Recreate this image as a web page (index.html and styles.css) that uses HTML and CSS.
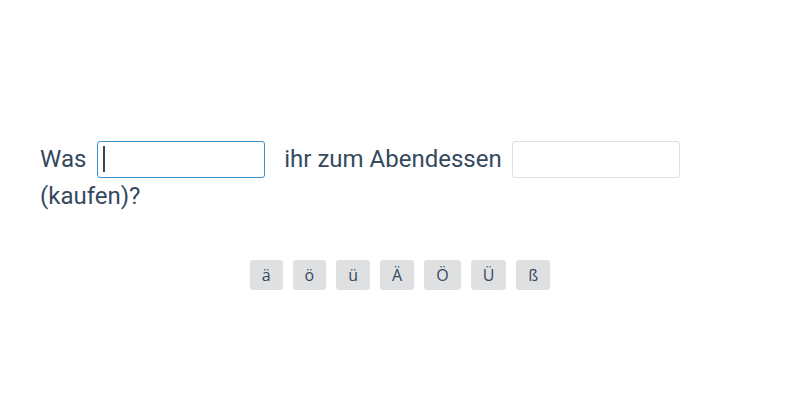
FILE: index.html
```html
<!DOCTYPE html>
<html lang="de">
<head>
<meta charset="utf-8">
<title>Lückentext</title>
<link rel="stylesheet" href="styles.css">
</head>
<body>
<main class="exercise">
  <p class="sentence">Was <span class="field field--active"><input class="gap" type="text" aria-label="Lücke 1"><span class="caret"></span></span> ihr zum Abendessen <span class="field field--second"><input class="gap" type="text" aria-label="Lücke 2"></span> (kaufen)?</p>
  <div class="keys">
    <button class="key" type="button">ä</button>
    <button class="key" type="button">ö</button>
    <button class="key" type="button">ü</button>
    <button class="key" type="button">Ä</button>
    <button class="key" type="button">Ö</button>
    <button class="key" type="button">Ü</button>
    <button class="key" type="button">ß</button>
  </div>
</main>
</body>
</html>
```
FILE: styles.css
```css
html, body {
  margin: 0;
  padding: 0;
  background: #ffffff;
}
body {
  font-family: Roboto, "Liberation Sans", sans-serif;
  color: #34495e;
}
.exercise {
  padding: 141px 40px 0 40px;
}
.sentence {
  margin: 0;
  font-size: 24px;
  line-height: 37px;
}
.field {
  position: relative;
  display: inline-block;
  vertical-align: top;
  margin: 0 5px 0 5px;
}
.field--second {
  margin-left: 4px;
}
.gap {
  display: block;
  box-sizing: border-box;
  width: 168px;
  height: 37px;
  margin: 0;
  padding: 0 6px;
  border: 1px solid #dcdfe3;
  border-radius: 3px;
  background: #ffffff;
  font: inherit;
  color: inherit;
  outline: none;
  caret-color: transparent;
}
.field--active .gap {
  border-color: #3c92d0;
  margin-right: 8px;
}
.caret {
  position: absolute;
  left: 6px;
  top: 5px;
  width: 2px;
  height: 26px;
  background: #34495e;
}
.keys {
  display: flex;
  justify-content: center;
  gap: 10px;
  margin-top: 45px;
}
.key {
  height: 30px;
  padding: 0 12px;
  border: 0;
  border-radius: 3px;
  background: #dfe0e2;
  color: #34495e;
  font-family: "Open Sans", "Noto Sans", sans-serif;
  font-size: 16px;
  line-height: 30px;
  cursor: pointer;
}
```
